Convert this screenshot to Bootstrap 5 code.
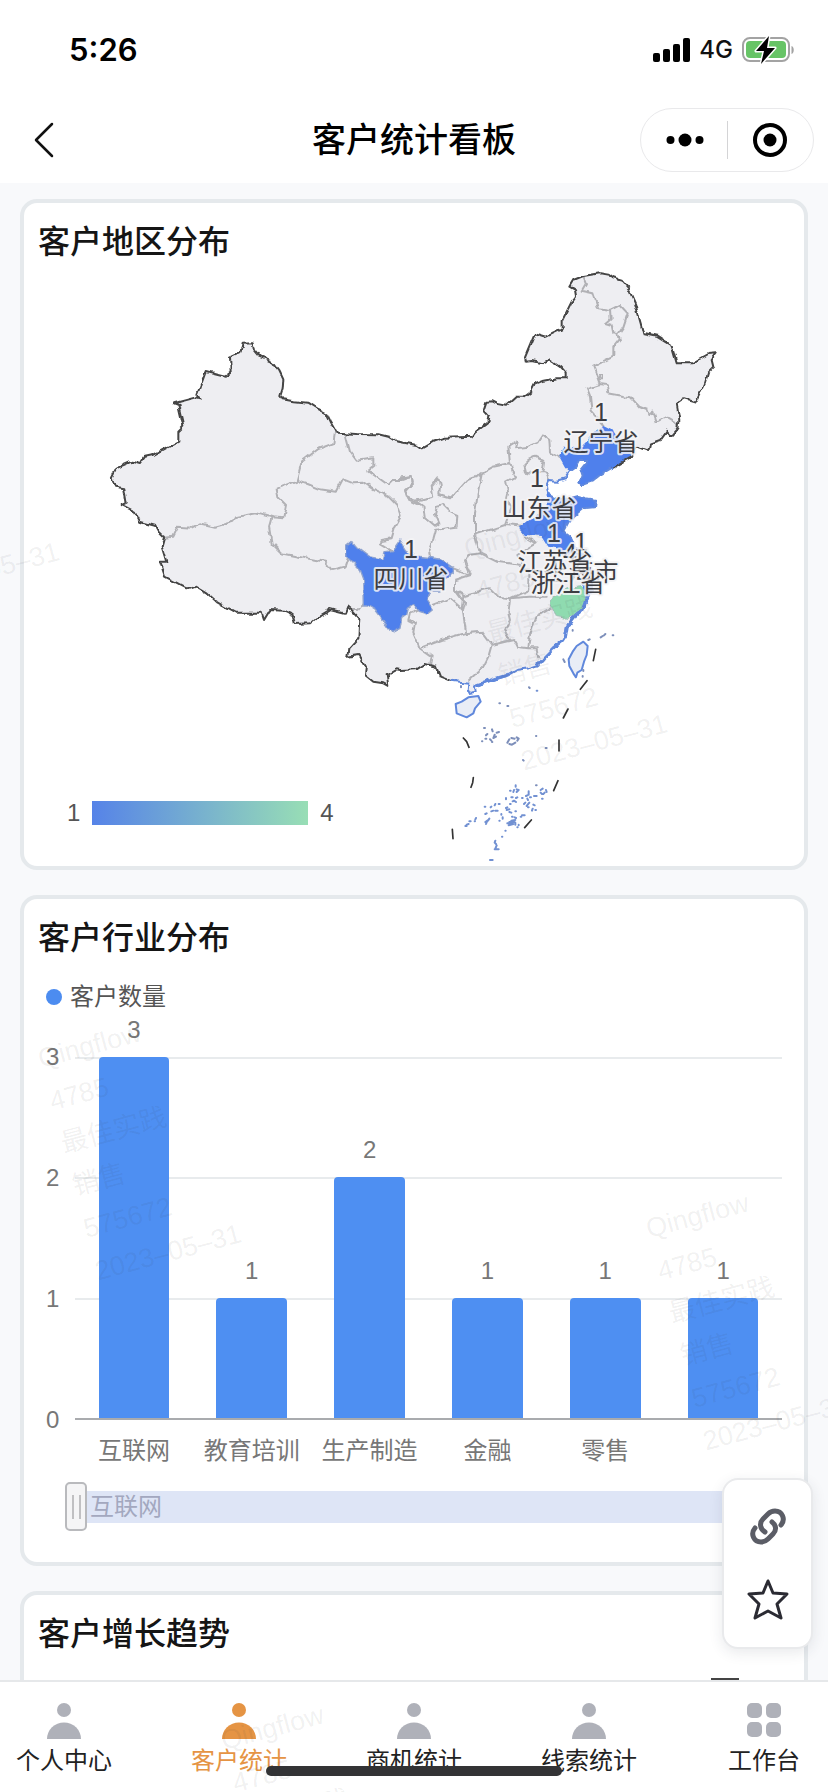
<!DOCTYPE html>
<html lang="zh-CN">
<head>
<meta charset="utf-8">
<meta name="viewport" content="width=device-width, initial-scale=1">
<title>客户统计看板</title>
<link href="https://cdn.jsdelivr.net/npm/bootstrap@5.3.0/dist/css/bootstrap.min.css" rel="stylesheet">
<style>
  body { font-family: "Liberation Sans", "Noto Sans CJK SC", sans-serif; font-size: 24px; line-height: 36px; color: #222; background: #f8f9fb; }
  .status-bar { height: 96px; padding: 4px 33px 0 69px; font-family: Inter, sans-serif; }
  .clock { font-size: 31px; font-weight: 600; color: #000; }
  .network { font-size: 24px; font-weight: 500; color: #111; }
  .title-bar { height: 87px; padding: 0 14px; }
  .title-bar h1 { font-size: 34px; line-height: 48px; font-weight: 500; color: #000; }
  .side { flex: 1 1 0; }
  .back { margin-left: 18px; }
  .capsule { height: 64px; width: 174px; gap: 22px; border: 1px solid #e9e9eb; border-radius: 32px; background: #fff; }
  .capsule .split { width: 1px; height: 38px; background: #d4d4d6; }
  .bare { border: 0; background: none; padding: 0; color: inherit; line-height: 0; }
  .board { padding: 16px 20px 0; gap: 25px; scrollbar-width: none; min-height: 0; }
  .board::-webkit-scrollbar { display: none; }
  .panel { border: 4px solid #e5e9ec; border-radius: 17px; background: #fff; min-height: 671px; }
  .panel h2 { margin: 0; padding: 15px 14px 0; font-size: 32px; line-height: 48px; font-weight: 500; color: #151515; }
  .map-labels text { font-size: 25px; text-anchor: middle; fill: #3c3d42; stroke: #f4f4f6; stroke-opacity: .85; stroke-width: 4px; paint-order: stroke; stroke-linejoin: round; }
  .scale-key { left: 43px; bottom: 35px; gap: 12px; color: #555; }
  .scale-ramp { width: 216px; height: 24px; background: linear-gradient(90deg, #5683e8, #98deb5); }
  .series-key { margin-top: 20px; padding-left: 22px; gap: 8px; line-height: 30px; color: #555; }
  .series-dot { width: 16px; height: 16px; background: #4c8cf0; }
  .chart { margin: 45px 22px 0 15px; }
  .y-axis { width: 36px; height: 363px; padding-left: 7px; color: #777; }
  .y-axis span { line-height: 0; }
  .plot { height: 363px; border-bottom: 2px solid #a9abae; }
  .rules > div { border-top: 2px solid #e8ebed; }
  .bar { width: 60%; background: #4e8ff2; border-radius: 4px 4px 0 0; }
  .val { line-height: 24px; margin-bottom: 15px; color: #777; }
  .x-axis { margin: 13px 0 0 36px; color: #777; }
  .zoomer { margin: 13px 12px 31px 41px; height: 49px; }
  .zoomer input { appearance: none; -webkit-appearance: none; width: 100%; height: 49px; margin: 0; display: block; background: linear-gradient(#dee5f6, #dee5f6) 10px 9px / calc(100% - 20px) 32px no-repeat; }
  .zoomer input::-webkit-slider-thumb { -webkit-appearance: none; width: 22px; height: 49px; border: 2px solid #b9babd; border-radius: 5px; background: linear-gradient(#c0c0c2, #c0c0c2) 5px 11px / 2px 24px no-repeat, linear-gradient(#c0c0c2, #c0c0c2) 12px 11px / 2px 24px no-repeat, #f5f5f6; }
  .zoomer label { left: 25px; top: 7px; color: #a3a8bf; }
  .quick { right: 15px; bottom: 143px; width: 91px; height: 171px; gap: 31px; border: 2px solid #e9eaec; border-radius: 16px; background: #fff; box-shadow: 0 4px 14px rgba(40, 50, 70, .1); z-index: 3; }
  .trend-mark { width: 28px; height: 2px; background: #444; margin: 20px 65px 0 0; }
  .tabs { height: 112px; padding: 21px 16px 0; border-top: 2px solid #e6e8ea; }
  .tabs a { color: #222; text-decoration: none; line-height: 36px; min-width: 96px; gap: 4px; }
  .tabs svg { color: #afb1b9; }
  .tabs a.active, .tabs a.active svg { color: #e59444; }
  .home-line { width: 296px; height: 10px; bottom: 16px; background: #333335; z-index: 4; }
  .marks { z-index: 5; pointer-events: none; }
  .marks text { font-size: 27px; fill: #30343c; fill-opacity: .075; }
</style>
</head>
<body>
<div class="vh-100 d-flex flex-column position-relative overflow-hidden">
  <header class="bg-white">
    <div class="status-bar d-flex align-items-center justify-content-between">
      <span class="clock">5:26</span>
      <span class="d-flex align-items-center gap-2">
        <svg width="38" height="24" viewBox="0 0 38 24" aria-hidden="true"><rect x="0" y="15" width="7" height="9" rx="2"/><rect x="10" y="11" width="7" height="13" rx="2"/><rect x="20" y="6" width="7" height="18" rx="2"/><rect x="30" y="0" width="7" height="24" rx="2"/></svg>
        <span class="network">4G</span>
        <svg width="54" height="28" viewBox="0 0 54 28" aria-hidden="true"><rect x="2" y="2" width="46" height="23" rx="7" fill="#fff" stroke="#a3a3a3" stroke-width="2"/><rect x="5" y="5" width="40" height="17" rx="4" fill="#67c466"/><path d="M50.500 10v8c3-1 3-7 0-8z" fill="#a3a3a3"/><path d="M28 0 15 15h8l-3 13 14-16h-8z" stroke="#fff" stroke-width="3" stroke-linejoin="round" paint-order="stroke"/></svg>
      </span>
    </div>
    <div class="title-bar d-flex align-items-center">
      <div class="side"><button class="bare back" aria-label="返回"><svg width="24" height="36" viewBox="0 0 24 36" fill="none" stroke="#111" stroke-width="2.500" stroke-linecap="round" stroke-linejoin="round"><path d="M20 2 4 18l16 16"/></svg></button></div>
      <h1 class="m-0">客户统计看板</h1>
      <div class="side d-flex justify-content-end">
        <div class="capsule d-flex align-items-center justify-content-center">
          <button class="bare" aria-label="更多"><svg width="40" height="16" viewBox="0 0 40 16"><circle cx="5.500" cy="8" r="4"/><circle cx="20" cy="8" r="6.500"/><circle cx="34.500" cy="8" r="4"/></svg></button>
          <span class="split"></span>
          <button class="bare" aria-label="关闭"><svg width="40" height="36" viewBox="0 0 40 36"><circle cx="20" cy="18" r="15" fill="none" stroke="#000" stroke-width="4"/><circle cx="20" cy="18" r="6.500"/></svg></button>
        </div>
      </div>
    </div>
  </header>

  <main class="board flex-grow-1 d-flex flex-column overflow-auto">
    <section class="panel flex-shrink-0 position-relative">
      <h2>客户地区分布</h2>
      <svg class="d-block w-100" viewBox="24 266 780 600" role="img" aria-label="客户地区分布地图">
        <defs>
          <filter id="rough" x="-5%" y="-5%" width="110%" height="110%"><feTurbulence type="fractalNoise" baseFrequency=".1" numOctaves="2" seed="4"/><feDisplacementMap in="SourceGraphic" scale="6" xChannelSelector="R" yChannelSelector="G"/></filter>
        </defs>
        <g filter="url(#rough)">
          <g transform="translate(90 260) scale(.33333)" fill="none" stroke-linejoin="round" stroke-linecap="round">
            <path fill="#eeeef2" d="M458 248 488 247 492 268 510 290 530 298 552 308 568 330 580 355 578 385 571 408 578 418 610 424 655 428 685 447 710 460 722 485 741 518 800 522 865 523 895 530 915 543 930 545 980 555 995 565 1030 545 1065 533 1145 530 1155 515 1195 485 1198 472 1182 455 1192 425 1205 424 1220 432 1248 437 1278 410 1300 410 1325 392 1335 372 1360 362 1400 355 1430 355 1430 340 1410 318 1380 298 1355 310 1325 303 1308 305 1305 292 1335 220 1370 230 1415 208 1415 185 1445 125 1458 108 1455 90 1438 80 1450 60 1480 48 1530 40 1555 44 1570 55 1595 62 1615 85 1635 130 1652 190 1660 222 1700 230 1745 258 1760 310 1805 310 1855 282 1880 280 1865 300 1870 320 1855 335 1845 370 1818 425 1785 415 1760 432 1768 480 1765 505 1745 528 1730 512 1710 540 1680 550 1675 573 1640 560 1625 590 1568 622 1530 645 1505 665 1475 675 1468 668 1475 650 1470 635 1490 610 1492 600 1470 600 1460 620 1440 635 1425 655 1400 662 1375 660 1368 675 1370 695 1385 705 1410 718 1440 715 1465 708 1490 715 1515 720 1512 742 1480 745 1450 770 1435 790 1422 815 1445 835 1455 860 1475 880 1490 910 1480 930 1500 960 1502 990 1490 1020 1480 1045 1455 1065 1430 1100 1425 1130 1415 1145 1390 1165 1365 1190 1345 1215 1315 1225 1280 1230 1250 1248 1200 1262 1158 1278 1160 1298 1140 1302 1133 1288 1135 1268 1080 1262 1050 1250 1038 1220 1005 1212 980 1228 930 1230 920 1228 890 1245 895 1278 880 1270 850 1265 825 1245 828 1220 808 1185 775 1190 778 1165 805 1135 808 1075 790 1055 772 1040 765 1058 720 1047 690 1065 660 1090 615 1092 608 1065 580 1052 540 1050 522 1080 515 1058 440 1058 380 1025 350 998 315 977 292 985 225 950 210 905 232 905 218 860 225 835 205 815 195 797 150 785 135 755 95 735 110 728 103 685 75 680 65 652 78 625 125 605 150 612 165 590 190 585 265 545 265 515 280 500 265 435 252 430 320 412 332 415 322 402 347 333 405 347 422 335 420 290 452 275Z"/>
            <g stroke="#b1b1b5" stroke-width="6">
              <path d="M225 833 250 830 265 800 305 803 330 790 375 800 430 785 440 770 500 760 545 772 580 775 588 735 565 712 560 685 620 662 635 605 685 567 730 550 735 518M620 662 650 672 690 688 740 695 760 658 790 670 820 668 850 688 895 710 920 735 932 770 915 800 905 835 875 840 870 850 895 865 900 872M765 518 780 575 800 602 850 595 850 620 835 632 895 675 910 660 935 660 965 650 968 668 945 695 955 718 990 735M545 772 537 800 545 850 575 880 650 895 705 905 725 930 765 920 775 890M820 1030 805 1050 790 1050"/>
              <path transform="translate(930)" d="M0 655 35 652 38 670 15 690 20 710 45 722 100 710 95 680 115 655 120 675 118 705 150 715 200 660 235 650 245 640M45 722 70 740 75 775 105 800 118 790 105 760 110 740 130 735 150 755 172 765 170 800 135 805 108 810 100 840 85 880 88 895M245 640 235 690 225 760 225 825 240 880 205 885 195 905 212 945M245 640 280 620 330 610 325 560 350 545 345 565 385 560 415 548 430 525 448 540 450 575 478 590M330 610 345 650 318 665 325 700 320 720 335 740 315 795 222 825M370 615 385 600 405 590 435 605 430 640 400 640 375 635ZM435 640 445 660M315 795 365 800M240 880 290 905 360 915M375 830 410 850 385 865 355 885 365 910M212 945 165 960 165 990 190 1005 270 985 295 1010 330 1015 385 990 385 940 360 915M160 925 212 945M165 990 195 1030 190 1050 150 1015 100 1035M190 1005 185 1050 195 1115M330 1015 325 1060 330 1080 315 1110 330 1140 275 1155 245 1115 195 1120 125 1140 60 1165 40 1120 45 1090 25 1080 30 1060 60 1050M60 1165 95 1190 90 1215 75 1212M275 1155 265 1190 250 1220 205 1262M275 1155 340 1140 350 1160 385 1165 410 1165 415 1195M385 1165 390 1120 410 1070 455 1045M330 1015 385 1010 440 1010M550 48 558 70 545 92 580 100 595 145 630 150 660 135 683 160 670 200 655 222 660 240 640 265 640 290 580 320 595 360 600 372 620 375 625 400 690 412 715 440 740 450 745 465 760 455 770 485 800 470 835 490M630 150 632 178 618 190 635 195 640 220 655 222M600 372 560 385 570 410 575 455 610 495M598 345 608 345 608 358 596 358Z"/>
            </g>
            <path fill="#4f80ec" stroke="#8fa3cf" stroke-width="4" d="M770 855 785 843 800 860 840 890 880 898 885 878 905 875 930 840 950 870 980 888 1050 897 1090 925 1090 940 1060 960 1050 990 1020 990 1010 1020 1030 1050 1015 1062 990 1055 970 1035 955 1045 950 1065 935 1075 930 1105 905 1118 870 1070 855 1050 830 1035 820 1035 818 960 805 925 770 890Z"/>
            <path fill="#4f80ec" transform="translate(930)" d="M478 590 490 560 540 560 610 495 640 510 660 540 700 560 690 590 638 622 600 645 575 665 545 675 538 668 545 650 540 635 560 610 562 600 540 600 530 620 510 635 495 620ZM440 695 455 705 480 718 510 715 535 708 560 715 585 720 582 742 550 745 520 770 505 790 492 815 515 835 525 860 545 880 565 915 565 935 540 930 520 900 490 890 470 865 445 860 425 828 375 825 358 805 400 770 440 740ZM540 965 572 945 575 1000 560 1030 552 985Z"/>
            <path fill="#8fdbb0" stroke="#9fc0b4" stroke-width="3" transform="translate(930)" d="M455 1015 500 985 545 980 556 990 556 1025 546 1045 525 1062 505 1075 470 1070 455 1030Z"/>
            <path stroke="#6088dc" stroke-width="6" d="M1568 622 1530 645 1505 665 1475 675 1468 668 1475 650 1470 635 1490 610 1492 600 1470 600 1460 620 1440 635 1425 655 1400 662 1375 660 1368 675 1370 695 1385 705 1410 718 1440 715 1465 708 1490 715 1515 720 1512 742 1480 745 1450 770 1435 790 1422 815 1445 835 1455 860 1475 880 1490 910 1480 930 1500 960 1502 990 1490 1020 1480 1045 1455 1065 1430 1100 1425 1130 1415 1145 1390 1165 1365 1190 1345 1215 1315 1225 1280 1230 1250 1248 1200 1262 1158 1278 1160 1298 1140 1302 1133 1288 1135 1268 1080 1262"/>
            <path stroke="#6088dc" stroke-width="9" d="M1492 925 1502 960 1500 990 1480 1048 1455 1068 1432 1100 1427 1130 1417 1145 1390 1167 1365 1192 1345 1215M1250 1246 1200 1262 1158 1276"/>
            <path stroke="#444" stroke-width="6" d="M1080 1262 1050 1250 1038 1220 1005 1212 980 1228 930 1230 920 1228 890 1245 895 1278 880 1270 850 1265 825 1245 828 1220 808 1185 775 1190 778 1165 805 1135 808 1075 790 1055 772 1040 765 1058 720 1047 690 1065 660 1090 615 1092 608 1065 580 1052 540 1050 522 1080 515 1058 440 1058 380 1025 350 998 315 977 292 985 225 950 210 905 232 905 218 860 225 835 205 815 195 797 150 785 135 755 95 735 110 728 103 685 75 680 65 652 78 625 125 605 150 612 165 590 190 585 265 545 265 515 280 500 265 435 252 430 320 412 332 415 322 402 347 333 405 347 422 335 420 290 452 275 458 248 488 247 492 268 510 290 530 298 552 308 568 330 580 355 578 385 571 408 578 418 610 424 655 428 685 447 710 460 722 485 741 518 800 522 865 523 895 530 915 543 930 545 980 555 995 565 1030 545 1065 533 1145 530 1155 515 1195 485 1198 472 1182 455 1192 425 1205 424 1220 432 1248 437 1278 410 1300 410 1325 392 1335 372 1360 362 1400 355 1430 355 1430 340 1410 318 1380 298 1355 310 1325 303 1308 305 1305 292 1335 220 1370 230 1415 208 1415 185 1445 125 1458 108 1455 90 1438 80 1450 60 1480 48 1530 40 1555 44 1570 55 1595 62 1615 85 1635 130 1652 190 1660 222 1700 230 1745 258 1760 310 1805 310 1855 282 1880 280 1865 300 1870 320 1855 335 1845 370 1818 425 1785 415 1760 432 1768 480 1765 505 1745 528 1730 512 1710 540 1680 550 1675 573 1640 560 1625 590 1568 622"/>
          </g>
        </g>
        <g transform="translate(400 560) scale(.33333)" fill="none" stroke-linecap="round" stroke-linejoin="round">
          <path fill="#e9edf6" stroke="#6088dc" stroke-width="6" d="M550 245 563 258 560 285 552 305 545 330 532 338 528 352 520 340 508 318 506 298 518 275 530 258ZM167 432 185 425 205 412 235 408 242 425 225 445 220 460 200 472 170 460Z"/>
          <path stroke="#333" stroke-width="5" d="M587 268 580 302M561 362 541 388M504 447 490 474M477 540V573M474 662 461 692M394 780 374 803M157 808 159 836M220 653 218 668 213 682M190 534 200 545 207 562"/>
          <path stroke="#7d8fba" stroke-width="6" d="M602 232 608 228M612 226 616 222M638 226H640M565 240 569 238M490 298 494 306M550 330V333M548 348V350M518 210V212M595 100M387 382 389 384M298 430H300M322 438H325M408 528H409M437 564H440M369 600 371 602M183 378V382M252 504H255M276 508 278 514M290 518 297 516M258 526 262 522M284 524 280 534 288 530M256 536H259M270 538 274 542M246 544H247M276 546H277M322 548 328 538M334 534 344 536M350 532 356 536 352 542M346 548 336 554 328 552M408 676H410"/>
          <path stroke="#7291d2" stroke-width="6" d="M410 392H412M347 676V680M342 690 340 696M350 688 356 690 350 696M330 692H332M422 690 428 686M438 690 440 696M426 702 422 698M434 698 430 702M426 716H428M402 708H410M390 712H393M366 714H368M378 708 382 706M386 694V704M334 712H338M348 714 352 712M318 714V718M338 724 342 722 348 726M382 716 384 720M330 732H332M372 732 376 728M388 728 380 738M384 742H386M400 734 404 736M396 752 398 746M406 750H408M296 732H299M284 736 286 732M272 742 274 740M254 740H256M318 744 322 742M320 750 328 748M328 756 334 758M346 754H348M274 754 280 752M286 752H293M256 762 260 760M304 762V764M366 766H374M362 770H364M308 772V776M298 782H299M268 776 264 782M256 786 262 782 258 792M228 774 226 778M224 784H225M208 784 212 784M206 792 200 794M196 798H200M336 770H338M344 772 348 774M334 782 346 780M328 786H344M322 790 338 788M326 796 340 792M346 788V794M356 794V796M352 802H353M316 812H317M306 830H307M286 842 284 848 288 852M290 856 286 866M284 868H296M270 900H278"/>
        </g>
        <g class="map-labels">
          <text x="581" y="551">1</text><text x="581" y="581">上海市</text>
          <text x="570" y="562">4</text>
          <text x="554" y="542">1</text><text x="555" y="571">江苏省</text>
          <text x="568" y="592">浙江省</text>
          <text x="537" y="487">1</text><text x="539" y="517">山东省</text>
          <text x="601" y="421">1</text><text x="601" y="451">辽宁省</text>
          <text x="411" y="558">1</text><text x="411" y="588">四川省</text>
        </g>
      </svg>
      <div class="scale-key position-absolute d-flex align-items-center"><span>1</span><span class="scale-ramp"></span><span>4</span></div>
    </section>

    <section class="panel flex-shrink-0">
      <h2>客户行业分布</h2>
      <div class="series-key d-flex align-items-center"><span class="series-dot rounded-circle"></span><span>客户数量</span></div>
      <div class="chart">
        <div class="d-flex">
          <div class="y-axis d-flex flex-column justify-content-between"><span>3</span><span>2</span><span>1</span><span>0</span></div>
          <div class="plot flex-grow-1 position-relative">
            <div class="rules position-absolute top-0 start-0 w-100 h-100 d-flex flex-column"><div class="flex-fill"></div><div class="flex-fill"></div><div class="flex-fill"></div></div>
            <div class="row g-0 h-100 position-relative">
              <div class="col h-100 d-flex flex-column justify-content-end align-items-center"><span class="val">3</span><div class="bar flex-shrink-0" style="height:100%"></div></div>
              <div class="col h-100 d-flex flex-column justify-content-end align-items-center"><span class="val">1</span><div class="bar flex-shrink-0" style="height:33.33%"></div></div>
              <div class="col h-100 d-flex flex-column justify-content-end align-items-center"><span class="val">2</span><div class="bar flex-shrink-0" style="height:66.67%"></div></div>
              <div class="col h-100 d-flex flex-column justify-content-end align-items-center"><span class="val">1</span><div class="bar flex-shrink-0" style="height:33.33%"></div></div>
              <div class="col h-100 d-flex flex-column justify-content-end align-items-center"><span class="val">1</span><div class="bar flex-shrink-0" style="height:33.33%"></div></div>
              <div class="col h-100 d-flex flex-column justify-content-end align-items-center"><span class="val">1</span><div class="bar flex-shrink-0" style="height:33.33%"></div></div>
            </div>
          </div>
        </div>
        <div class="x-axis row g-0 text-center text-nowrap"><span class="col">互联网</span><span class="col">教育培训</span><span class="col">生产制造</span><span class="col">金融</span><span class="col">零售</span><span class="col"></span></div>
      </div>
      <div class="zoomer position-relative"><input id="zoom" type="range" min="0" max="5" value="0"><label class="position-absolute" for="zoom">互联网</label></div>
    </section>

    <section class="panel flex-shrink-0">
      <h2>客户增长趋势</h2>
      <div class="trend-mark ms-auto"></div>
    </section>
  </main>

  <aside class="quick position-absolute d-flex flex-column align-items-center justify-content-center">
    <button class="bare" aria-label="复制链接"><svg width="40" height="40" viewBox="0 0 40 40" fill="none" stroke="#5b5d66" stroke-width="5" stroke-linecap="round" stroke-linejoin="round"><path d="M33 18c5-6 1-14-6-14-3 0-5 1-7 3l-5 5c-4 4-3 10 2 13"/><path d="M7 21c-5 6-1 14 6 14 3 0 5-1 7-3l5-5c4-4 3-9-1-12"/></svg></button>
    <button class="bare" aria-label="收藏"><svg width="42" height="42" viewBox="0 0 42 42" fill="none" stroke="#2b2b33" stroke-width="3" stroke-linejoin="round"><path d="m21 3 5 12 14 1-10 10 4 14-13-7-13 7 4-14L2 16l14-1z"/></svg></button>
  </aside>

  <nav class="tabs bg-white d-flex justify-content-between flex-shrink-0">
    <a href="#me" class="d-flex flex-column align-items-center"><svg width="36" height="36" viewBox="0 0 36 36" fill="currentColor"><circle cx="18" cy="7" r="7"/><path d="M1 36a17 16.500 0 0 1 34 0z"/></svg><span>个人中心</span></a>
    <a href="#customers" class="active d-flex flex-column align-items-center"><svg width="36" height="36" viewBox="0 0 36 36" fill="currentColor"><circle cx="18" cy="7" r="7"/><path d="M1 36a17 16.500 0 0 1 34 0z"/></svg><span>客户统计</span></a>
    <a href="#deals" class="d-flex flex-column align-items-center"><svg width="36" height="36" viewBox="0 0 36 36" fill="currentColor"><circle cx="18" cy="7" r="7"/><path d="M1 36a17 16.500 0 0 1 34 0z"/></svg><span>商机统计</span></a>
    <a href="#leads" class="d-flex flex-column align-items-center"><svg width="36" height="36" viewBox="0 0 36 36" fill="currentColor"><circle cx="18" cy="7" r="7"/><path d="M1 36a17 16.500 0 0 1 34 0z"/></svg><span>线索统计</span></a>
    <a href="#work" class="d-flex flex-column align-items-center"><svg width="36" height="36" viewBox="0 0 36 36" fill="currentColor"><rect x="1" width="15" height="15" rx="5"/><rect x="20" width="15" height="15" rx="5"/><rect x="1" y="19" width="15" height="15" rx="5"/><rect x="20" y="19" width="15" height="15" rx="5"/></svg><span>工作台</span></a>
  </nav>
  <div class="home-line position-absolute start-50 translate-middle-x rounded-pill"></div>

  <svg class="marks position-absolute top-0 start-0 w-100 h-100" aria-hidden="true">
    <defs>
      <g id="mark"><text y="0">Qingflow</text><text y="44">4785</text><text y="88">最佳实践</text><text y="132">销售</text><text y="176">575672</text><text y="220">2023–05–31</text></g>
    </defs>
    <use href="#mark" transform="translate(-141 386) rotate(-15)"/>
    <use href="#mark" transform="translate(467 558) rotate(-15)"/>
    <use href="#mark" transform="translate(41 1068) rotate(-15)"/>
    <use href="#mark" transform="translate(649 1238) rotate(-15)"/>
    <use href="#mark" transform="translate(224 1750) rotate(-15)"/>
  </svg>
</div>
<script src="https://cdn.jsdelivr.net/npm/bootstrap@5.3.0/dist/js/bootstrap.bundle.min.js"></script>
</body>
</html>
